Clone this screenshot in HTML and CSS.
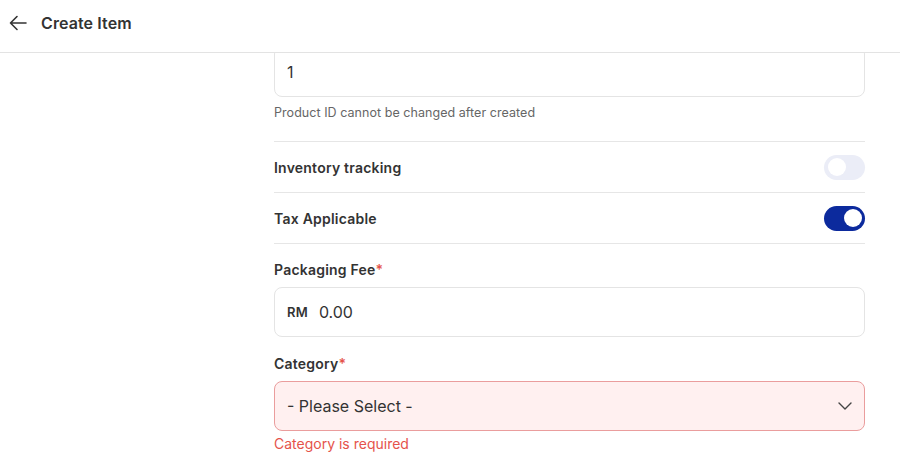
FILE: index.html
```html
<!DOCTYPE html>
<html>
<head>
<meta charset="utf-8">
<link rel="stylesheet" href="styles.css">
</head>
<body>
<header class="topbar">
  <svg class="back" width="18" height="16" viewBox="0 0 18 16" fill="none" stroke="#333" stroke-width="1.6" stroke-linecap="round" stroke-linejoin="round"><path d="M17 8H1.5M8 1.5L1.5 8L8 14.5"/></svg>
  <h1 class="title">Create Item</h1>
</header>
<main class="main">
  <form class="form">
    <div class="input"><span class="value">1</span></div>
    <p class="help">Product ID cannot be changed after created</p>
    <div class="row"><span class="row-label">Inventory tracking</span><span class="toggle"><span class="knob"></span></span></div>
    <div class="row"><span class="row-label">Tax Applicable</span><span class="toggle on"><span class="knob"></span></span></div>
    <div class="field">
      <label class="label">Packaging Fee<span class="req">*</span></label>
      <div class="input"><span class="prefix">RM</span><span class="value">0.00</span></div>
    </div>
    <div class="field">
      <label class="label">Category<span class="req">*</span></label>
      <div class="input select"><span class="value">- Please Select -</span>
        <svg class="chev" width="14" height="8" viewBox="0 0 14 8" fill="none" stroke="#444" stroke-width="1.4" stroke-linecap="round" stroke-linejoin="round"><path d="M1 1l6 6 6-6"/></svg>
      </div>
      <p class="error">Category is required</p>
    </div>
  </form>
</main>
</body>
</html>
```
FILE: styles.css
```css
* { box-sizing: border-box; }
html, body { margin: 0; padding: 0; background: #fff; }
body { font-family: Inter, "Noto Sans", sans-serif; color: #333; width: 900px; height: 468px; overflow: hidden; }
.topbar { position: relative; z-index: 2; height: 53px; display: flex; align-items: center; gap: 14px; padding: 0 0 6px 9px; border-bottom: 1px solid #e3e3e3; background: #fff; }
.back { display: block; }
.title { margin: 0; font-size: 16px; font-weight: 600; color: #333; letter-spacing: 0.1px; }
.main { height: 415px; overflow: hidden; padding-left: 274px; }
.form { width: 591px; margin-top: -7px; }
.input { height: 51px; border: 1px solid #e4e4e4; border-radius: 8px; display: flex; align-items: center; padding: 0 12px; font-size: 16px; color: #333; }
.field .input { height: 50px; }
.value { font-size: 16px; }
.prefix { font-size: 13px; font-weight: 600; margin-right: 11px; color: #333; letter-spacing: 0.2px; }
.help { margin: 8px 0 0; font-size: 12.5px; line-height: 16px; color: #666; padding-bottom: 20px; border-bottom: 1px solid #e6e6e6; letter-spacing: 0.05px; }
.row { height: 51px; display: flex; align-items: center; justify-content: space-between; border-bottom: 1px solid #e6e6e6; }
.row-label { font-size: 14px; font-weight: 600; color: #333; letter-spacing: 0.22px; }
.toggle { width: 41px; height: 25px; border-radius: 13px; background: #ebedf7; position: relative; display: block; }
.toggle .knob { position: absolute; top: 3.5px; left: 3.5px; width: 18px; height: 18px; border-radius: 50%; background: #fff; }
.toggle.on { background: #0c2a9d; }
.toggle.on .knob { left: auto; right: 3.5px; }
.field { margin-top: 16px; }
.field + .field { margin-top: 17px; }
.label { display: block; font-size: 14px; font-weight: 600; line-height: 20px; margin-bottom: 7px; color: #333; letter-spacing: 0.22px; }
.req { color: #e5534b; }
.select { background: #fff0f0; border-color: #ea9d9d; justify-content: space-between; }
.select .value { color: #333; }
.chev { margin-right: 0; }
.error { margin: 4px 0 0; font-size: 14px; line-height: 18px; color: #e5534b; }
```
